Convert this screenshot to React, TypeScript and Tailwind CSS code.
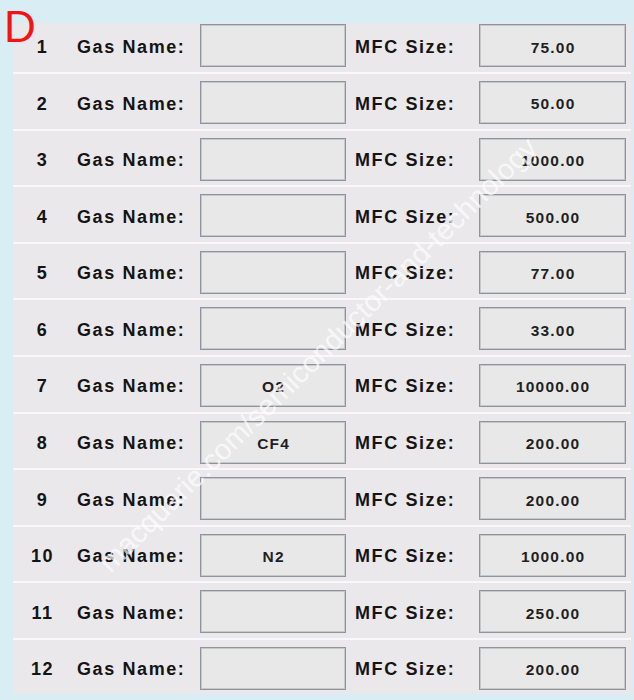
import React from "react";

type Row = { n: number; gas: string; size: string };

const ROWS: Row[] = [
  { n: 1, gas: "", size: "75.00" },
  { n: 2, gas: "", size: "50.00" },
  { n: 3, gas: "", size: "1000.00" },
  { n: 4, gas: "", size: "500.00" },
  { n: 5, gas: "", size: "77.00" },
  { n: 6, gas: "", size: "33.00" },
  { n: 7, gas: "O2", size: "10000.00" },
  { n: 8, gas: "CF4", size: "200.00" },
  { n: 9, gas: "", size: "200.00" },
  { n: 10, gas: "N2", size: "1000.00" },
  { n: 11, gas: "", size: "250.00" },
  { n: 12, gas: "", size: "200.00" },
];

const font = { fontFamily: '"Liberation Sans", Arial, sans-serif' };

const Field = ({ value, w }: { value: string; w: string }) => (
  <div
    className={`${w} h-[43px] flex items-center justify-center bg-[#e8e8e9] border border-[#8f949a] shadow-[inset_0_0_0_1px_#c6c9cc] text-[15.5px] font-bold tracking-[1.2px] text-[#1f1f1f]`}
  >
    <span className="pt-[3px] pl-[1.2px]">{value}</span>
  </div>
);

const GasRow = ({ row }: { row: Row }) => (
  <div className="h-[56.6px] border-t-2 border-[#f8f7f9] flex items-start pt-[7px] text-[18px] font-bold tracking-[1.6px] text-[#141414]">
    <div className="w-[59px] h-[43px] flex items-center justify-center pt-[3px]">{row.n}</div>
    <div className="w-[128px] h-[43px] flex items-center pl-[5px] pt-[3px]">Gas Name:</div>
    <Field value={row.gas} w="w-[146px]" />
    <div className="w-[133px] h-[43px] flex items-center pl-[9px] pt-[3px]">MFC Size:</div>
    <Field value={row.size} w="w-[147px]" />
  </div>
);

export default function App() {
  return (
    <div className="relative w-[634px] h-[700px] overflow-hidden bg-[#d8eef4]" style={font}>
      <div className="pt-[23px] pl-[13px]">
        <div className="w-[618px] h-[671px] overflow-hidden bg-[#ebe8eb]">
          <div className="-mt-[7.6px]">
            {ROWS.map((r) => (
              <GasRow key={r.n} row={r} />
            ))}
          </div>
        </div>
      </div>

      <div className="absolute left-[4px] top-[5px] text-[44px] leading-none text-[#f21414]">D</div>

      <div className="absolute left-[318px] top-[355px] -translate-x-1/2 -translate-y-1/2 rotate-[-44.7deg] whitespace-nowrap text-[29px] leading-none text-white/70 pointer-events-none">
        macquarie.com/semiconductor-and-technology
      </div>
    </div>
  );
}
